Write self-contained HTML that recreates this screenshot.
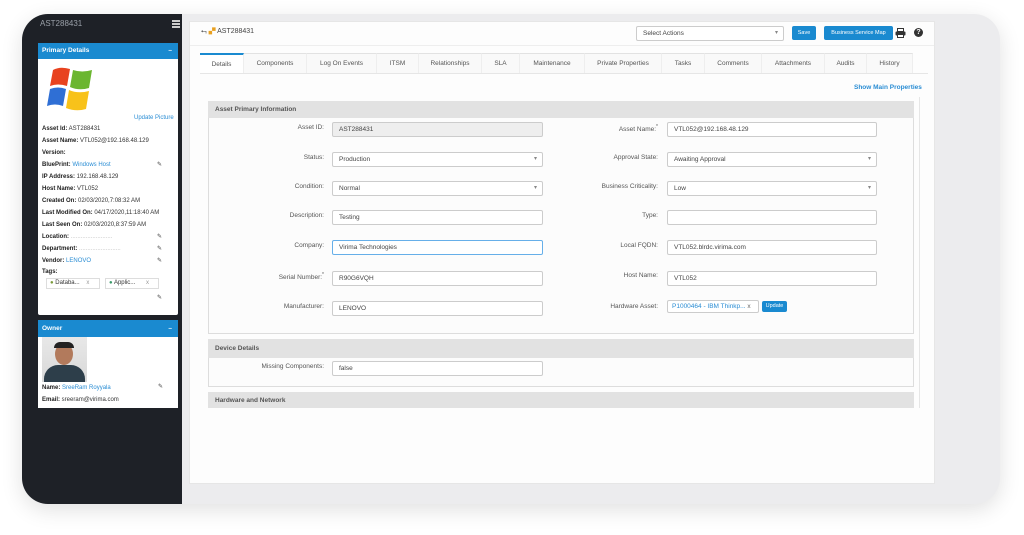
<!DOCTYPE html>
<html><head><meta charset="utf-8"><style>
*{margin:0;padding:0;box-sizing:border-box}
body{width:1024px;height:535px;background:#fff;position:relative;overflow:hidden;font-family:"Liberation Sans",Arial,sans-serif;color:#333}
.a{position:absolute}
.frame{left:22px;top:14px;width:978px;height:490px;background:#ececee;border-radius:26px;box-shadow:0 6px 22px rgba(0,0,0,.12)}
.side{left:22px;top:14px;width:160px;height:490px;background:#1e2127;border-radius:26px 0 0 26px}
.main{left:189px;top:21px;width:746px;height:463px;background:#fdfdfd;border:1px solid #e6e6e6}
.ph{background:#1a8ad0;color:#fff;font-weight:bold;font-size:6.5px;padding-left:4px;line-height:15px}
.pb{background:#fff}
.sl{font-size:6px;color:#333;white-space:nowrap}
.sl b{color:#222}
.lk{color:#2a8dd4}
.pin{font-size:6px;color:#444}
.tab{top:53px;height:20px;font-size:6.5px;color:#555;text-align:center;line-height:20px;border-top:1px solid #e2e2e2;background:#f9f9f9;border-right:1px solid #eee}
.inp{height:15px;border:1px solid #ccc;background:#fff;font-size:6.5px;line-height:13px;padding-left:6px;color:#444;border-radius:2px}
.lbl{font-size:6.5px;color:#555;text-align:right;width:120px}
.sel::after{content:"▾";position:absolute;right:5px;top:0;font-size:6px;color:#888}
.sh{background:#e2e2e2;font-size:6.5px;font-weight:bold;color:#555;padding-left:7px;line-height:17px}
.btn{background:#1a8ad0;color:#fff;font-size:5.5px;text-align:center;line-height:14px;border-radius:2px}
</style></head><body>
<div class="a frame"></div>
<div class="a side"></div>
<div class="a" style="left:40px;top:19px;font-size:8px;color:#9aa0a8">AST288431</div>
<div class="a" style="left:172px;top:20px;width:8px;height:8px;border-top:2px solid #ccc;border-bottom:2px solid #ccc"><div style="margin-top:1px;border-top:2px solid #ccc"></div></div>

<!-- Primary details panel -->
<div class="a" style="left:38px;top:43px;width:140px;height:272px;background:#fff;border-radius:2px"></div>
<div class="a ph" style="left:38px;top:43px;width:140px;height:16px">Primary Details<span style="position:absolute;right:6px">–</span></div>
<svg class="a" style="left:46px;top:64px" width="52" height="48" viewBox="0 0 52 48">
<path d="M7 6 Q14 2 24 5 L21 22 Q12 19 4 22 Z" fill="#e8421f"/>
<path d="M27 6 Q36 9 46 6 L43 24 Q33 27 24 23 Z" fill="#6bb630"/>
<path d="M4 25 Q12 22 20 25 L17 42 Q9 39 1 42 Z" fill="#2f6fd5"/>
<path d="M23 26 Q32 30 43 27 L40 45 Q30 48 20 44 Z" fill="#f8c21a"/>
</svg>
<div class="a sl lk" style="left:134px;top:115px">Update Picture</div>
<div class="a sl" style="left:42px;top:126px"><b>Asset Id:</b> AST288431</div>
<div class="a sl" style="left:42px;top:138px"><b>Asset Name:</b> VTL052@192.168.48.129</div>
<div class="a sl" style="left:42px;top:150px"><b>Version:</b></div>
<div class="a sl" style="left:42px;top:162px"><b>BluePrint:</b> <span class="lk">Windows Host</span></div>
<div class="a sl" style="left:42px;top:174px"><b>IP Address:</b> 192.168.48.129</div>
<div class="a sl" style="left:42px;top:186px"><b>Host Name:</b> VTL052</div>
<div class="a sl" style="left:42px;top:198px"><b>Created On:</b> 02/03/2020,7:08:32 AM</div>
<div class="a sl" style="left:42px;top:210px"><b>Last Modified On:</b> 04/17/2020,11:18:40 AM</div>
<div class="a sl" style="left:42px;top:222px"><b>Last Seen On:</b> 02/03/2020,8:37:59 AM</div>
<div class="a sl" style="left:42px;top:234px"><b>Location:</b> <span style="color:#bbb">.........................</span></div>
<div class="a sl" style="left:42px;top:246px"><b>Department:</b> <span style="color:#bbb">.........................</span></div>
<div class="a sl" style="left:42px;top:258px"><b>Vendor:</b> <span class="lk">LENOVO</span></div>
<div class="a sl" style="left:42px;top:269px"><b>Tags:</b></div>
<div class="a pin" style="left:157px;top:161px">✎</div>
<div class="a pin" style="left:157px;top:233px">✎</div>
<div class="a pin" style="left:157px;top:245px">✎</div>
<div class="a pin" style="left:157px;top:257px">✎</div>
<div class="a pin" style="left:157px;top:294px">✎</div>
<div class="a sl" style="left:46px;top:278px;width:54px;height:11px;border:1px solid #ddd;line-height:9px;padding-left:3px"><span style="color:#7a9a3a">●</span> Databa... <span style="color:#999;margin-left:5px">x</span></div>
<div class="a sl" style="left:105px;top:278px;width:54px;height:11px;border:1px solid #ddd;line-height:9px;padding-left:3px"><span style="color:#3a9a6a">●</span> Applic... <span style="color:#999;margin-left:9px">x</span></div>

<!-- Owner -->
<div class="a" style="left:38px;top:320px;width:140px;height:88px;background:#fff"></div>
<div class="a ph" style="left:38px;top:320px;width:140px;height:17px;line-height:17px">Owner<span style="position:absolute;right:6px">–</span></div>
<div class="a" style="left:42px;top:337px;width:45px;height:45px;background:linear-gradient(#e8e8e8,#d8d8d8)">
<div style="position:absolute;left:13px;top:6px;width:18px;height:22px;border-radius:50%;background:#b27a5c"></div>
<div style="position:absolute;left:12px;top:5px;width:20px;height:6px;border-radius:8px 8px 0 0;background:#222"></div>
<div style="position:absolute;left:2px;top:28px;width:41px;height:17px;border-radius:14px 14px 0 0;background:#2d3e4a"></div>
</div>
<div class="a sl" style="left:42px;top:385px"><b>Name:</b> <span class="lk">SreeRam Royyala</span></div>
<div class="a pin" style="left:158px;top:383px">✎</div>
<div class="a sl" style="left:42px;top:397px"><b>Email:</b> sreeram@virima.com</div>

<!-- main -->
<div class="a main"></div>
<div class="a" style="left:190px;top:45px;width:744px;border-top:1px solid #eee"></div>
<div class="a" style="left:201px;top:28px;font-size:7px;color:#444">⮢ <span style="color:#e8a020">▞</span> AST288431</div>
<div class="a inp sel" style="left:636px;top:26px;width:148px;height:15px">Select Actions</div>
<div class="a btn" style="left:792px;top:26px;width:24px;height:14px">Save</div>
<div class="a btn" style="left:824px;top:26px;width:69px;height:14px">Business Service Map</div>
<svg class="a" style="left:895px;top:28px" width="11" height="10" viewBox="0 0 11 10"><rect x="2.5" y="0.5" width="6" height="3" fill="none" stroke="#333"/><rect x="0.5" y="3.5" width="10" height="4" rx="1" fill="#333"/><rect x="2.5" y="6.5" width="6" height="3" fill="#fff" stroke="#333"/></svg>
<div class="a" style="left:914px;top:28px;width:9px;height:9px;border-radius:50%;background:#333;color:#fff;font-size:7px;font-weight:bold;text-align:center;line-height:9px">?</div>

<div class="a tab" style="left:200px;width:44px;background:#fff;border-top:2px solid #1a8ad0">Details</div>
<div class="a tab" style="left:244px;width:63px">Components</div>
<div class="a tab" style="left:307px;width:70px">Log On Events</div>
<div class="a tab" style="left:377px;width:42px">ITSM</div>
<div class="a tab" style="left:419px;width:63px">Relationships</div>
<div class="a tab" style="left:482px;width:38px">SLA</div>
<div class="a tab" style="left:520px;width:65px">Maintenance</div>
<div class="a tab" style="left:585px;width:77px">Private Properties</div>
<div class="a tab" style="left:662px;width:43px">Tasks</div>
<div class="a tab" style="left:705px;width:57px">Comments</div>
<div class="a tab" style="left:762px;width:63px">Attachments</div>
<div class="a tab" style="left:825px;width:42px">Audits</div>
<div class="a tab" style="left:867px;width:46px">History</div>
<div class="a" style="left:200px;top:73px;width:728px;border-top:1px solid #e6e6e6"></div>
<div class="a" style="left:854px;top:84px;font-size:6.5px;font-weight:bold;color:#2a8dd4">Show Main Properties</div>

<!-- section 1 -->
<div class="a" style="left:208px;top:101px;width:706px;height:233px;border:1px solid #ddd;background:#fcfcfc"></div>
<div class="a sh" style="left:208px;top:101px;width:706px;height:17px">Asset Primary Information</div>
<div class="a lbl" style="left:204px;top:124px">Asset ID:</div><div class="a inp" style="left:332px;top:122px;width:211px;background:#eee">AST288431</div>
<div class="a lbl" style="left:204px;top:154px">Status:</div><div class="a inp sel" style="left:332px;top:152px;width:211px">Production</div>
<div class="a lbl" style="left:204px;top:183px">Condition:</div><div class="a inp sel" style="left:332px;top:181px;width:211px">Normal</div>
<div class="a lbl" style="left:204px;top:212px">Description:</div><div class="a inp" style="left:332px;top:210px;width:211px">Testing</div>
<div class="a lbl" style="left:204px;top:242px">Company:</div><div class="a inp" style="left:332px;top:240px;width:211px;border-color:#66afe9">Virima Technologies</div>
<div class="a lbl" style="left:204px;top:272px">Serial Number:<sup style="font-size:5px">*</sup></div><div class="a inp" style="left:332px;top:271px;width:211px">R90G6VQH</div>
<div class="a lbl" style="left:204px;top:303px">Manufacturer:</div><div class="a inp" style="left:332px;top:301px;width:211px">LENOVO</div>

<div class="a lbl" style="left:538px;top:124px">Asset Name:<sup style="font-size:5px">*</sup></div><div class="a inp" style="left:667px;top:122px;width:210px">VTL052@192.168.48.129</div>
<div class="a lbl" style="left:538px;top:154px">Approval State:</div><div class="a inp sel" style="left:667px;top:152px;width:210px">Awaiting Approval</div>
<div class="a lbl" style="left:538px;top:183px">Business Criticality:</div><div class="a inp sel" style="left:667px;top:181px;width:210px">Low</div>
<div class="a lbl" style="left:538px;top:212px">Type:</div><div class="a inp" style="left:667px;top:210px;width:210px"></div>
<div class="a lbl" style="left:538px;top:242px">Local FQDN:</div><div class="a inp" style="left:667px;top:240px;width:210px">VTL052.blrdc.virima.com</div>
<div class="a lbl" style="left:538px;top:272px">Host Name:</div><div class="a inp" style="left:667px;top:271px;width:210px">VTL052</div>
<div class="a lbl" style="left:538px;top:303px">Hardware Asset:</div><div class="a inp" style="left:667px;top:300px;width:92px;height:13px;line-height:11px;color:#2a8dd4;padding-left:4px">P1000464 - IBM Thinkp... <span style="color:#666">x</span></div>
<div class="a btn" style="left:762px;top:301px;width:25px;height:11px;line-height:11px">Update</div>

<!-- device details -->
<div class="a" style="left:208px;top:339px;width:706px;height:48px;border:1px solid #ddd;background:#fcfcfc"></div>
<div class="a sh" style="left:208px;top:339px;width:706px;height:19px;line-height:19px">Device Details</div>
<div class="a lbl" style="left:204px;top:363px">Missing Components:</div><div class="a inp" style="left:332px;top:361px;width:211px">false</div>
<div class="a sh" style="left:208px;top:392px;width:706px;height:16px;line-height:18px">Hardware and Network</div>
<div class="a" style="left:919px;top:97px;height:311px;border-left:1px solid #e6e6e6"></div>
</body></html>
